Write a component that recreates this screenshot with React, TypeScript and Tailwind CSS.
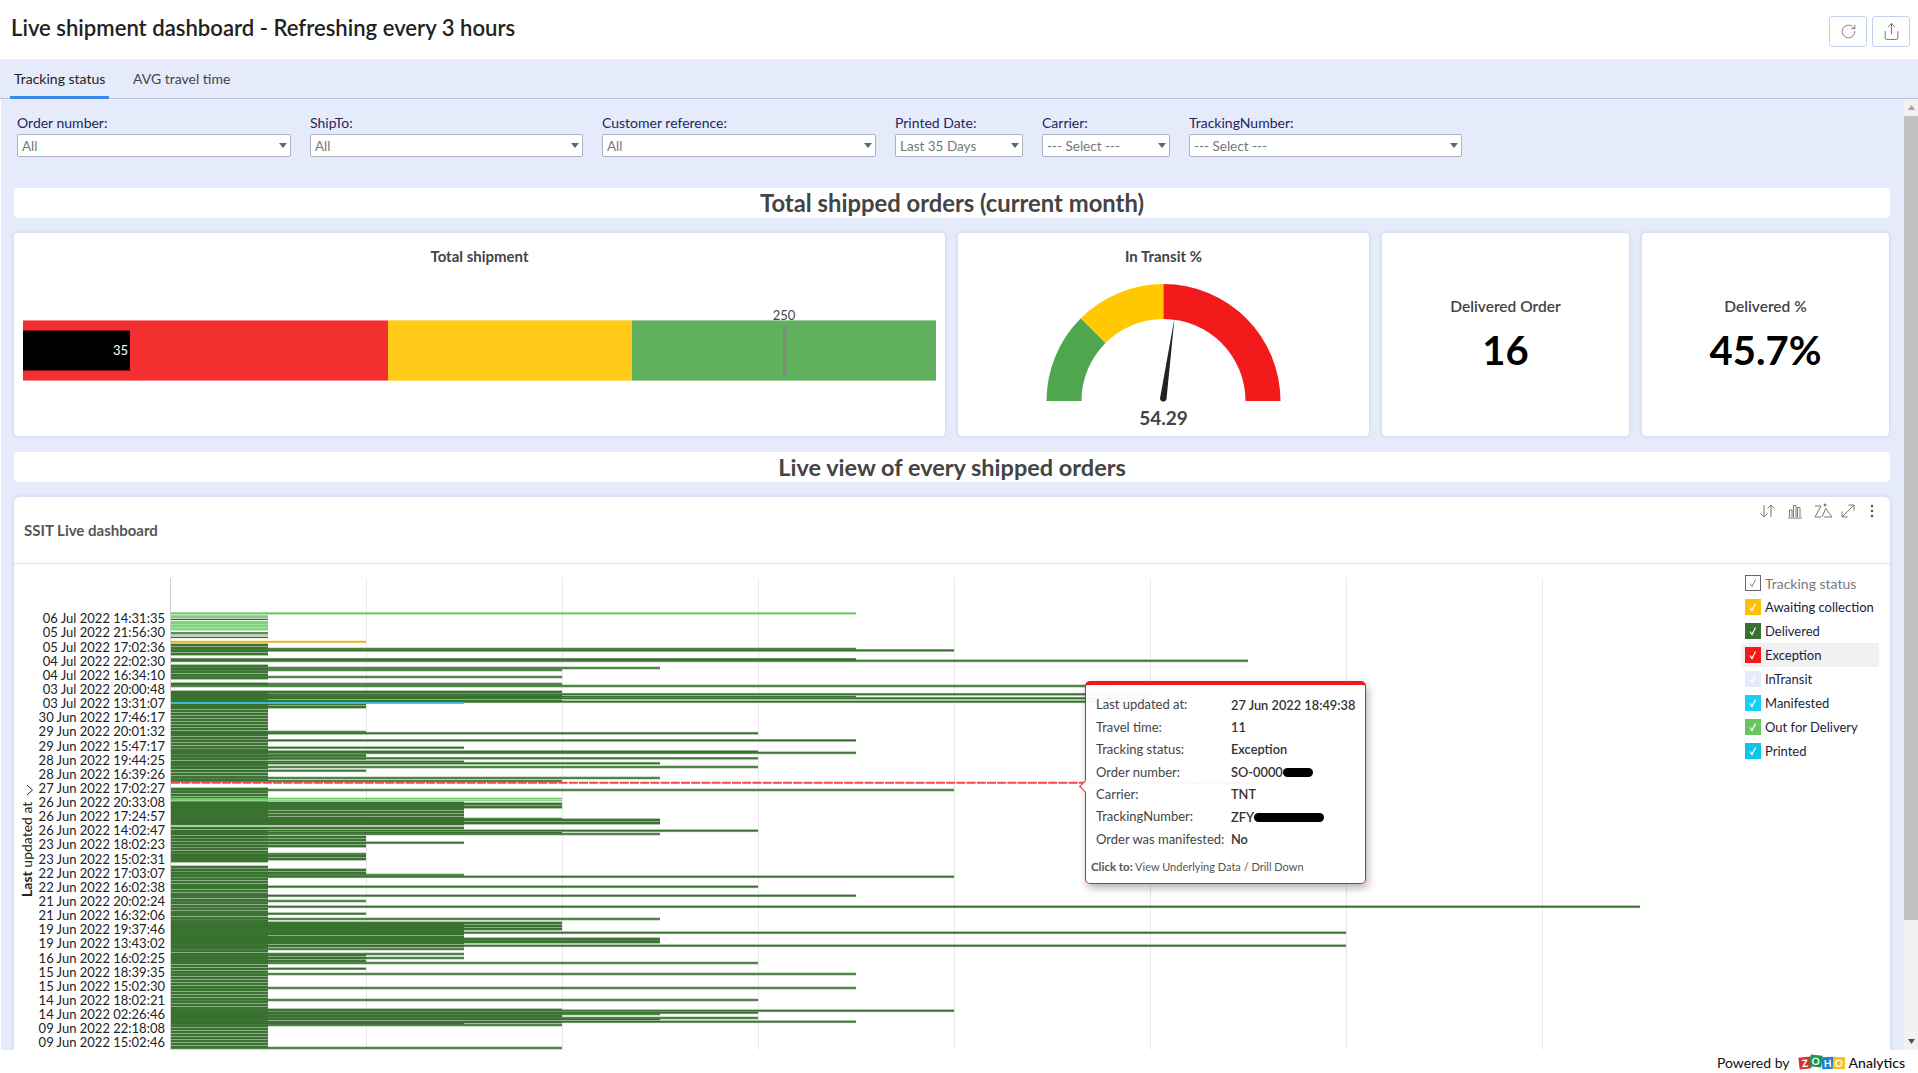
import { Fragment } from "react"
import { RotateCw, Share } from "lucide-react"

const filters = [
  { label: "Order number:", value: "All", width: "w-[274px]" },
  { label: "ShipTo:", value: "All", width: "w-[273px]" },
  { label: "Customer reference:", value: "All", width: "w-[274px]" },
  { label: "Printed Date:", value: "Last 35 Days", width: "w-[128px]" },
  { label: "Carrier:", value: "--- Select ---", width: "w-[128px]" },
  { label: "TrackingNumber:", value: "--- Select ---", width: "w-[273px]" },
]

// y centre of each axis label, in page pixels
const axisLabels: [number, string][] = [
  [618, "06 Jul 2022 14:31:35"],
  [632, "05 Jul 2022 21:56:30"],
  [647, "05 Jul 2022 17:02:36"],
  [661, "04 Jul 2022 22:02:30"],
  [675, "04 Jul 2022 16:34:10"],
  [689, "03 Jul 2022 20:00:48"],
  [703, "03 Jul 2022 13:31:07"],
  [717, "30 Jun 2022 17:46:17"],
  [731, "29 Jun 2022 20:01:32"],
  [746, "29 Jun 2022 15:47:17"],
  [760, "28 Jun 2022 19:44:25"],
  [774, "28 Jun 2022 16:39:26"],
  [788, "27 Jun 2022 17:02:27"],
  [802, "26 Jun 2022 20:33:08"],
  [816, "26 Jun 2022 17:24:57"],
  [830, "26 Jun 2022 14:02:47"],
  [844, "23 Jun 2022 18:02:23"],
  [859, "23 Jun 2022 15:02:31"],
  [873, "22 Jun 2022 17:03:07"],
  [887, "22 Jun 2022 16:02:38"],
  [901, "21 Jun 2022 20:02:24"],
  [915, "21 Jun 2022 16:32:06"],
  [929, "19 Jun 2022 19:37:46"],
  [943, "19 Jun 2022 13:43:02"],
  [958, "16 Jun 2022 16:02:25"],
  [972, "15 Jun 2022 18:39:35"],
  [986, "15 Jun 2022 15:02:30"],
  [1000, "14 Jun 2022 18:02:21"],
  [1014, "14 Jun 2022 02:26:46"],
  [1028, "09 Jun 2022 22:18:08"],
  [1042, "09 Jun 2022 15:02:46"],
]

const DARK = "#38702f"
const BAND = "#64925f"
const PALE = "#8fb18b"
const LIGHT = "#65c75e"
const AXIS_X = 170
const PITCH = 3
const unit = (n: number) => AXIS_X + n * 98

// gaps in the stack of short rows
const gaps = [
  [638.6, 641.5],
  [656.6, 658.4],
  [662.6, 664.2],
  [680, 681.4],
  [687.8, 691.6],
  [784, 786],
  [826, 827.4],
  [863, 864.6],
]

// [from y, to y, end unit]: thick stacks of bars
const stacks: [number, number, number][] = [
  [704, 708, 2],
  [755.5, 758.5, 2],
  [803, 825, 3],
  [804, 809, 4],
  [820, 824, 5],
  [828, 830, 3],
  [837, 847, 2],
  [856, 861, 2],
  [870, 875, 2],
  [925, 946, 3],
  [923, 929, 4],
  [939, 943, 5],
  [955, 963, 2],
  [1010, 1024, 4],
  [692, 702.5, 4],
]

// single long bars, read off the picture: [y, end unit]
const singles: [number, number][] = [
  [649, 7], [650.4, 8], [659.3, 7], [660.8, 11], [668, 5], [670, 4], [677, 4],
  [684, 4], [686, 9.6], [694.3, 10], [696.7, 7], [698.3, 10], [701.7, 10],
  [732, 2], [733.3, 6], [740.4, 7], [747.7, 3], [751.6, 6], [752.8, 7], [758.3, 6],
  [761.7, 3], [763.3, 5], [767, 6], [770.7, 2], [778, 5], [781, 4],
  [790, 8], [819, 4], [830.7, 6], [832.7, 4], [834, 5], [842.7, 3],
  [854, 2], [875, 3], [876.7, 8], [886.7, 6], [895.7, 7], [901, 2], [906.7, 15],
  [913.7, 2], [919, 5], [932.7, 12], [941, 5], [945.7, 12], [949, 3], [954, 3], [958, 3],
  [963, 6], [968.7, 2], [974, 7], [988, 7], [1000, 6], [1010.7, 8], [1012.7, 6],
  [1014, 5], [1016, 4], [1018, 6], [1019.3, 5], [1021.7, 7], [1023.7, 3], [1025, 4], [1048, 4],
]

// rows of the stacked blocks: a pale band with a dark core
const stripes: { y: number; end: number }[] = []
for (let y = 642; y < 1050; y += PITCH) {
  if (gaps.some(([a, b]) => y + 1.2 > a && y - 1.2 < b)) continue
  stripes.push({ y, end: unit(1) })
}
stacks.forEach(([a, b, n]) => {
  for (let y = a; y <= b; y += PITCH) stripes.push({ y, end: unit(n) })
})

// flat coloured rows: [y, end x, height, colour]
const flats: [number, number, number, string][] = [
  [613.4, unit(7), 2, LIGHT],
  [616.6, unit(1), 2.8, "#7ed379"],
  [619.4, unit(1), 1.4, DARK],
  [622.6, unit(1), 3, "#7ed379"],
  [625.8, unit(1), 3, "#7ed379"],
  [629, unit(1), 3, "#86d681"],
  [633, unit(1), 1.6, DARK],
  [635, unit(1), 1.6, "#9fc79b"],
  [637.4, unit(1), 1.4, DARK],
  [641.8, unit(2), 2, "#eeb41f"],
  [703, unit(3), 1.8, "#2fc9e6"],
  [798.6, unit(4), 1.6, LIGHT],
  [800.6, unit(4), 1.6, "#8ed68a"],
]

const legend = [
  { label: "Awaiting collection", color: "bg-[#ffc107]" },
  { label: "Delivered", color: "bg-[#38702f]" },
  { label: "Exception", color: "bg-[#f21a1a]", hover: true },
  { label: "InTransit", color: "bg-[#e5ebfb]" },
  { label: "Manifested", color: "bg-[#17cff5]" },
  { label: "Out for Delivery", color: "bg-[#65c75e]" },
  { label: "Printed", color: "bg-[#0cc5e8]" },
]

const tooltipRows: { label: string; value: string; blot?: string }[] = [
  { label: "Last updated at:", value: "27 Jun 2022 18:49:38" },
  { label: "Travel time:", value: "11" },
  { label: "Tracking status:", value: "Exception" },
  { label: "Order number:", value: "SO-0000", blot: "w-[30px]" },
  { label: "Carrier:", value: "TNT" },
  { label: "TrackingNumber:", value: "ZFY", blot: "w-[70px]" },
  { label: "Order was manifested:", value: "No" },
]

function Caret() {
  return (
    <svg width="8" height="5" viewBox="0 0 8 5" className="shrink-0">
      <path d="M0 0H8L4 5Z" fill="#666" />
    </svg>
  )
}

function FilterSelect({ label, value, width }: { label: string; value: string; width: string }) {
  return (
    <div className={`flex flex-col ${width}`}>
      <span className="h-[18px] text-[14px] leading-[18px] text-[#26265a]">{label}</span>
      <div className="mt-[2px] flex h-[23px] items-center justify-between rounded-[2px] border border-[#aeb2c6] bg-white pl-[4px] pr-[3px] text-[13.5px] text-[#777]">
        <span className="pt-[1px]">{value}</span>
        <Caret />
      </div>
    </div>
  )
}

function SectionHeading({ children, className }: { children: string; className: string }) {
  return (
    <div className={`flex h-[30px] items-center justify-center rounded-[4px] bg-white pt-[2px] font-bold text-[#444] ${className}`}>
      {children}
    </div>
  )
}

function Gauge() {
  return (
    <svg viewBox="1034 276 260 130" className="mt-[11px] h-[130px] w-[260px]">
      <path d="M1046.5 401A117 117 0 0 1 1080.77 318.27L1105.52 343.02A82 82 0 0 0 1081.5 401Z" fill="#4ea64e" />
      <path d="M1080.77 318.27A117 117 0 0 1 1163.5 284V319A82 82 0 0 0 1105.52 343.02Z" fill="#ffc800" />
      <path d="M1163.5 284A117 117 0 0 1 1280.5 401H1245.5A82 82 0 0 0 1163.5 319Z" fill="#f21a1a" />
      <path d="M1174.5 318L1166.5 399A3.3 3.3 0 0 1 1160 398.6Z" fill="#222" />
    </svg>
  )
}

function ToolIcons() {
  return (
    <div className="mr-[16px] mt-[6px] flex items-center text-[#777]">
      <svg width="18" height="16" viewBox="0 0 18 16" fill="none" stroke="currentColor" strokeWidth="1">
        <path d="M5 2V14M1.5 10.5L5 14L8.5 10.5M12 14V2M8.5 5.5L12 2L15.5 5.5" />
      </svg>
      <svg className="ml-[10px]" width="16" height="16" viewBox="0 0 16 16" fill="none" stroke="currentColor" strokeWidth="1">
        <path d="M1 15H15M2.5 14V7H5V14M6.5 14V2.5H9V14M10.5 14V4.5H13V14" />
      </svg>
      <svg className="ml-[11.5px]" width="20" height="16" viewBox="0 0 20 16" fill="none" stroke="currentColor" strokeWidth="1">
        <path d="M1 3H7L1 14H7M12 5L8 14M12 6L18 14H10" />
        <circle cx="11" cy="2" r="1" fill="currentColor" />
      </svg>
      <svg className="ml-[6px]" width="16" height="16" viewBox="0 0 16 16" fill="none" stroke="currentColor" strokeWidth="1">
        <path d="M2 14L14 2M8.5 2H14V7.5M2 8.5V14H7.5" />
      </svg>
      <svg className="ml-[14px]" width="4" height="16" viewBox="0 0 4 16">
        <circle cx="2" cy="3" r="1.3" fill="#555" />
        <circle cx="2" cy="8" r="1.3" fill="#555" />
        <circle cx="2" cy="13" r="1.3" fill="#555" />
      </svg>
    </div>
  )
}

function ChartPlot() {
  return (
    <svg viewBox="14 564 1726 486" className="h-[486px] w-[1726px] shrink-0">
      {[1, 2, 3, 4, 5, 6, 7].map((n) => (
        <rect key={n} x={AXIS_X + n * 196} y={578} width="1" height={472} fill="#e8e8e8" />
      ))}
      <rect x={AXIS_X} y={578} width="1" height={472} fill="#cfcfcf" />
      {stripes.map((b, i) => (
        <rect key={i} x={AXIS_X + 1} y={b.y - PITCH / 2} width={b.end - AXIS_X - 1} height={PITCH} fill={BAND} />
      ))}
      {singles.map(([y, n], i) => (
        <rect key={i} x={AXIS_X + 1} y={y - 1.4} width={unit(n) - AXIS_X - 1} height="2.8" fill={PALE} />
      ))}
      {stripes.map((b, i) => (
        <rect key={i} x={AXIS_X + 1} y={b.y - 0.9} width={b.end - AXIS_X - 1} height="1.8" fill={DARK} />
      ))}
      {singles.map(([y, n], i) => (
        <rect key={i} x={AXIS_X + 1} y={y - 0.7} width={unit(n) - AXIS_X - 1} height="1.4" fill={DARK} />
      ))}
      {flats.map(([y, end, h, fill], i) => (
        <rect key={i} x={AXIS_X + 1} y={y - h / 2} width={end - AXIS_X - 1} height={h} fill={fill} />
      ))}
      <line x1={AXIS_X + 1} y1="782.7" x2="1250" y2="782.7" stroke="#f04a4a" strokeWidth="2" strokeDasharray="9 1.2" />
      {axisLabels.map(([y, text]) => (
        <text key={text} x="165" y={y + 4.5} textAnchor="end" fontSize="13" fill="#222">
          {text}
        </text>
      ))}
      <text transform="translate(32 897) rotate(-90)" fontSize="14" fill="#222">
        <tspan fontWeight="700">Last</tspan> updated at
      </text>
      <path d="M27 785L32.5 790L27 795" fill="none" stroke="#222" strokeWidth="1" />
    </svg>
  )
}

function Legend() {
  return (
    <div className="ml-[1px] flex w-[138px] flex-col pt-[7px] text-[13px] text-[#1c1c3c]">
      <div className="flex h-[24px] items-center pl-[4px] text-[14px] text-[#777]">
        <span className="flex h-[16px] w-[16px] items-center justify-center border border-[#666]">
          <svg width="10" height="10" viewBox="0 0 10 10" fill="none" stroke="#888" strokeWidth="1">
            <path d="M2 5.5L4 8.5L7.5 1.5" />
          </svg>
        </span>
        <span className="ml-[4px]">Tracking status</span>
      </div>
      {legend.map((item) => (
        <div key={item.label} className={`flex h-[24px] items-center pl-[4px] ${item.hover ? "bg-[#f1f1f1]" : ""}`}>
          <span className={`flex h-[16px] w-[16px] items-center justify-center ${item.color}`}>
            <svg width="10" height="10" viewBox="0 0 10 10" fill="none" stroke="white" strokeWidth="1.2">
              <path d="M2 5.5L4 8.5L7.5 1.5" />
            </svg>
          </span>
          <span className="ml-[4px] whitespace-nowrap pt-[1px]">{item.label}</span>
        </div>
      ))}
    </div>
  )
}

function Tooltip() {
  return (
    <div className="absolute left-[1071px] top-[184px] h-[203px] w-[281px] rounded-[5px] border border-t-[4px] border-[#e81c1c] bg-white/95 pl-[10px] pt-[9px] text-[13px] text-[#444] shadow-[2px_4px_8px_rgba(0,0,0,0.3)]">
      <span className="absolute left-[-5px] top-[97px] h-[9px] w-[9px] rotate-45 border-b border-l border-[#e81c1c] bg-white" />
      <div className="grid grid-cols-[135px_1fr] auto-rows-[22.4px] items-center">
        {tooltipRows.map((row) => (
          <Fragment key={row.label}>
            <span className="whitespace-nowrap">{row.label}</span>
            <span className="flex items-center text-[12.8px] font-semibold text-[#333]">
              {row.value}
              {row.blot && <span className={`h-[9px] rounded-full bg-black ${row.blot}`} />}
            </span>
          </Fragment>
        ))}
      </div>
      <div className="ml-[-5px] mt-[7px] whitespace-nowrap text-[11px] text-[#555]">
        <b className="text-[11.5px] font-bold">Click to:</b> View Underlying Data / Drill Down
      </div>
    </div>
  )
}

function ZohoLogo() {
  const tiles = [
    { ch: "Z", cls: "bg-[#d8302f] -rotate-6 mt-[1px]" },
    { ch: "O", cls: "bg-[#159a45] rotate-6 -mt-[3px]" },
    { ch: "H", cls: "bg-[#1f7fd0] -rotate-3" },
    { ch: "O", cls: "bg-[#f5c21a] rotate-3" },
  ]
  return (
    <span className="ml-[9px] flex items-center">
      {tiles.map((t, i) => (
        <span key={i} className={`flex h-[12px] w-[11.5px] items-center justify-center text-[10px] font-bold leading-none text-white ${t.cls}`}>
          {t.ch}
        </span>
      ))}
    </span>
  )
}

export default function App() {
  return (
    <div className="flex h-[1073px] w-[1918px] flex-col overflow-hidden bg-white font-[family-name:Lato,sans-serif]">
      {/* Title bar */}
      <div className="flex h-[59px] shrink-0 items-start justify-between pl-[11px] pr-[8px]">
        <h1 className="mt-[12px] text-[22.1px] font-semibold leading-[32px] text-[#222]">
          Live shipment dashboard - Refreshing every 3 hours
        </h1>
        <div className="mt-[16px] flex gap-[5px]">
          <button className="flex h-[31px] w-[38px] items-center justify-center rounded-[3px] border border-[#c3d2ec] text-[#555]">
            <RotateCw size={17} strokeWidth={1} />
          </button>
          <button className="flex h-[31px] w-[38px] items-center justify-center rounded-[3px] border border-[#c3d2ec] text-[#555]">
            <Share size={19} strokeWidth={1} />
          </button>
        </div>
      </div>

      {/* Tabs */}
      <div className="flex h-[40px] shrink-0 border-b border-[#b9c1d6] bg-[#e5ebfb] pl-[10px] text-[14px]">
        <div className="flex h-[40px] w-[99px] items-center border-b-[3px] border-[#3b86e8] pl-[4px] pt-[2px] text-[#222]">
          Tracking status
        </div>
        <div className="ml-[24px] flex h-[39px] items-center text-[#444]">AVG travel time</div>
      </div>

      <div className="flex min-h-0 flex-1">
        <main className="min-w-0 flex-1 overflow-hidden border-l border-white bg-[#e5ebfb] pl-[13px] pr-[14px] pt-[15px]">
          <div className="flex gap-[19px] pl-[3px]">
            {filters.map((f) => (
              <FilterSelect key={f.label} {...f} />
            ))}
          </div>

          <SectionHeading className="mt-[31px] text-[23.8px]">Total shipped orders (current month)</SectionHeading>

          <div className="mt-[15px] flex h-[203px] gap-[13px]">
            <section className="flex w-[931px] flex-col rounded-[4px] bg-white px-[9px] pt-[14px] shadow-[0_0_4px_rgba(40,50,90,0.15)]">
              <h2 className="text-center text-[15px] font-bold leading-[18px] text-[#444]">Total shipment</h2>
              <div className="relative mt-[55px] flex h-[61px]">
                <div className="w-[365px] border-y border-[#f88] bg-[#f42f2f]" />
                <div className="w-[244px] border-y border-[#ffdc6a] bg-[#ffca18]" />
                <div className="w-[304px] border-y border-[#a5d2a2] bg-[#61b05e]" />
                <div className="absolute left-0 top-[10px] flex h-[41px] w-[107px] items-center justify-end border-y border-[#8b0f0f] bg-black pr-[2px] text-[13px] text-white">
                  35
                </div>
                <div className="absolute left-[760px] top-[6px] h-[49px] w-[3px] bg-[#7d8a7c]" />
                <div className="absolute left-[741px] top-[-13px] w-[40px] text-center text-[13px] leading-[16px] text-[#444]">250</div>
              </div>
            </section>

            <section className="flex w-[411px] flex-col items-center rounded-[4px] bg-white pt-[14px] shadow-[0_0_4px_rgba(40,50,90,0.15)]">
              <h2 className="text-[15px] font-bold leading-[18px] text-[#444]">In Transit %</h2>
              <Gauge />
              <div className="text-[19px] font-bold leading-[24px] text-[#444]">54.29</div>
            </section>

            <section className="flex w-[247px] flex-col items-center rounded-[4px] bg-white pt-[63px] shadow-[0_0_4px_rgba(40,50,90,0.15)]">
              <h2 className="text-[15.5px] font-semibold leading-[20px] text-[#444]">Delivered Order</h2>
              <div className="mt-[9px] text-[40px] font-bold leading-[50px] text-black">16</div>
            </section>

            <section className="flex w-[247px] flex-col items-center rounded-[4px] bg-white pt-[63px] shadow-[0_0_4px_rgba(40,50,90,0.15)]">
              <h2 className="text-[15.5px] font-semibold leading-[20px] text-[#444]">Delivered %</h2>
              <div className="mt-[9px] text-[40px] font-bold leading-[50px] text-black">45.7%</div>
            </section>
          </div>

          <SectionHeading className="mt-[16px] text-[23.5px]">Live view of every shipped orders</SectionHeading>

          <section className="relative mt-[15px] h-[553px] overflow-hidden rounded-t-[6px] bg-white shadow-[0_0_4px_rgba(40,50,90,0.15)]">
            <div className="flex h-[67px] items-start justify-between border-b border-[#e0e0e0] pl-[10px]">
              <h2 className="mt-[23px] text-[15px] font-bold leading-[20px] text-[#555]">SSIT Live dashboard</h2>
              <ToolIcons />
            </div>
            <div className="flex">
              <ChartPlot />
              <Legend />
            </div>
            <Tooltip />
          </section>
        </main>

        {/* Scrollbar */}
        <div className="flex w-[14px] shrink-0 flex-col items-center bg-[#f1f1f1]">
          <div className="flex h-[17px] items-center">
            <svg width="7" height="5" viewBox="0 0 7 5"><path d="M3.5 0L7 5H0Z" fill="#a3a3a3" /></svg>
          </div>
          <div className="h-[804px] w-full bg-[#c1c1c1]" />
          <div className="flex-1" />
          <div className="flex h-[17px] items-center">
            <svg width="7" height="5" viewBox="0 0 7 5"><path d="M0 0H7L3.5 5Z" fill="#505050" /></svg>
          </div>
        </div>
      </div>

      {/* Footer */}
      <div className="flex h-[23px] shrink-0 items-center justify-end pr-[13px] pt-[2px] text-[14px] text-[#111]">
        <span>Powered by</span>
        <ZohoLogo />
        <span className="ml-[4px] font-medium">Analytics</span>
      </div>
    </div>
  )
}
